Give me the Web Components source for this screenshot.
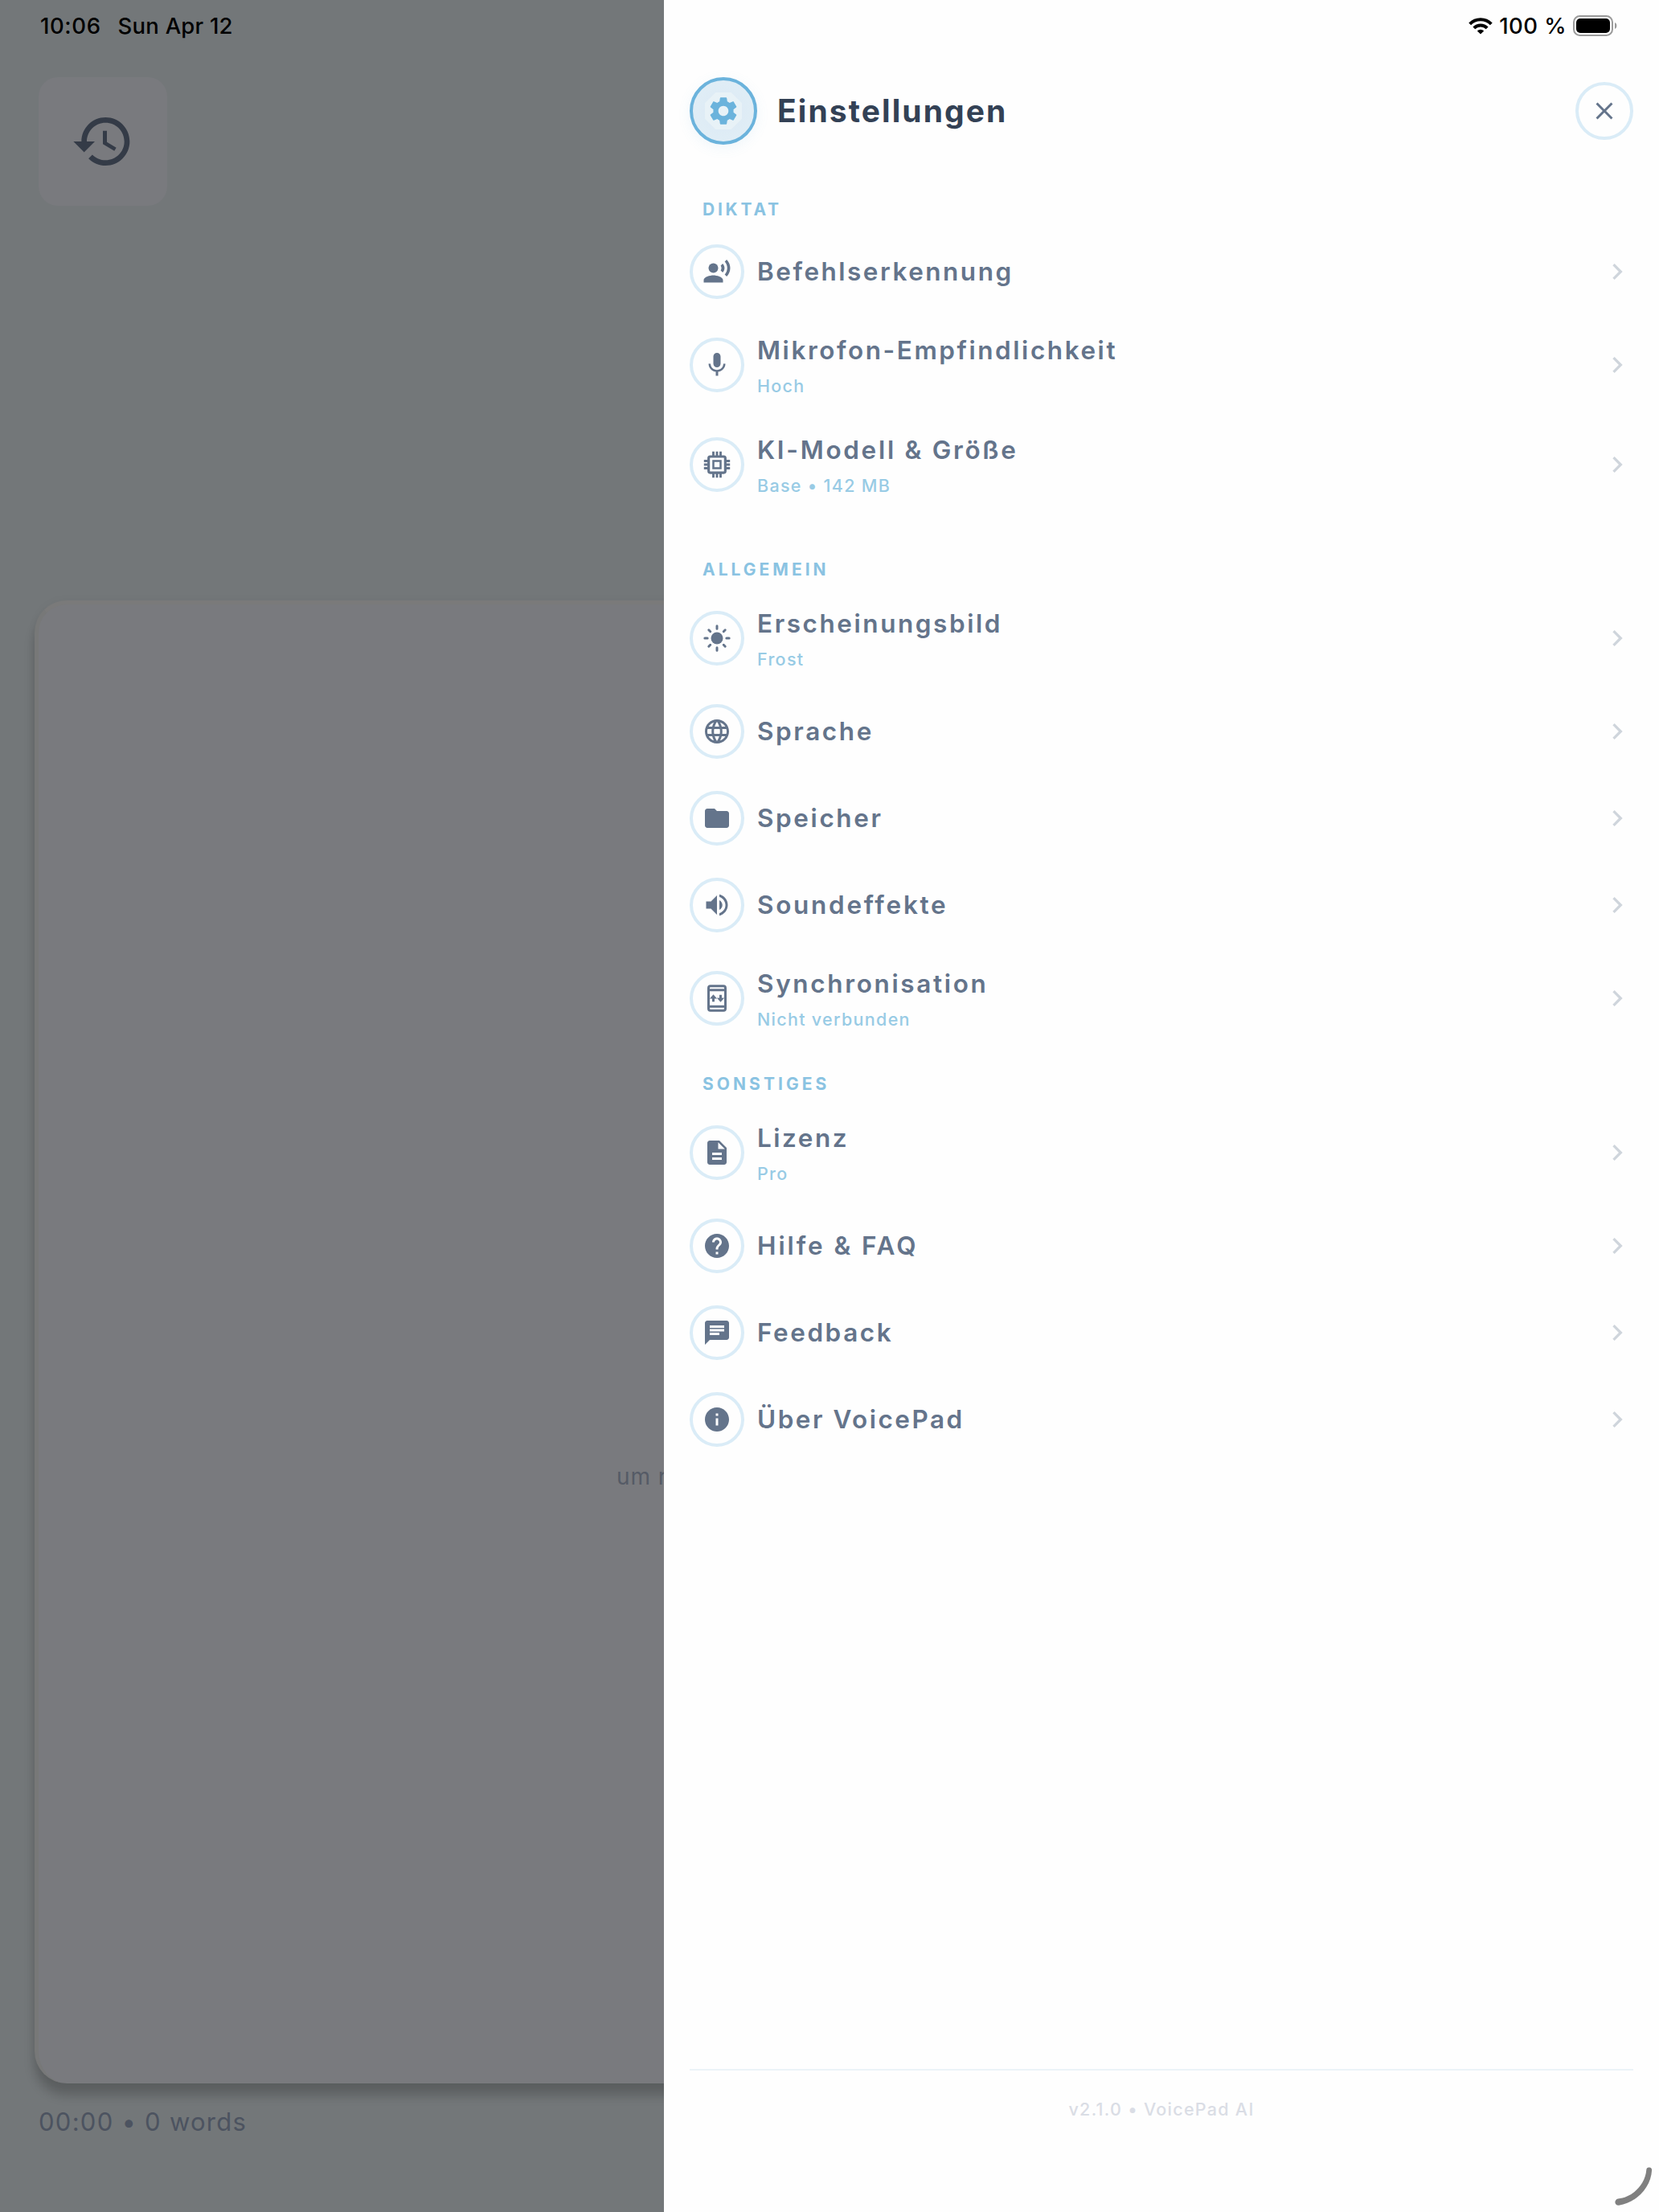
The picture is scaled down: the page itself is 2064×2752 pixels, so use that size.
<!DOCTYPE html>
<html lang="de">
<head>
<meta charset="utf-8">
<title>VoicePad – Einstellungen</title>
<style>
html,body{margin:0;height:100%;background:#737779}
body{font-family:Inter,"Liberation Sans",sans-serif;overflow:hidden}
</style>
</head>
<body>
<voicepad-screen>
  <dictation-view slot="main" time="10:06" date="Sun Apr 12" status="00:00 • 0 words">um r</dictation-view>
  <settings-panel slot="panel" heading="Einstellungen" version="v2.1.0 • VoicePad AI">
    <settings-section label="DIKTAT" tracking="3.77">
      <settings-row icon="voice" label="Befehlserkennung" tracking="2.5"></settings-row>
      <settings-row icon="mic" label="Mikrofon-Empfindlichkeit" tracking="2.55">Hoch</settings-row>
      <settings-row icon="chip" label="KI-Modell &amp; Größe" tracking="2.7">Base • 142 MB</settings-row>
    </settings-section>
    <settings-section class="spaced" label="ALLGEMEIN" tracking="4">
      <settings-row icon="sun" label="Erscheinungsbild" tracking="2.56">Frost</settings-row>
      <settings-row icon="globe" label="Sprache" tracking="2.6"></settings-row>
      <settings-row icon="folder" label="Speicher" tracking="2.6"></settings-row>
      <settings-row icon="volume" label="Soundeffekte" tracking="2.7"></settings-row>
      <settings-row icon="sync" label="Synchronisation" tracking="2.65">Nicht verbunden</settings-row>
    </settings-section>
    <settings-section label="SONSTIGES" tracking="4.05">
      <settings-row icon="doc" label="Lizenz" tracking="2.5">Pro</settings-row>
      <settings-row icon="help" label="Hilfe &amp; FAQ" tracking="2.9"></settings-row>
      <settings-row icon="chat" label="Feedback" tracking="2.55"></settings-row>
      <settings-row icon="info" label="Über VoicePad" tracking="2.5"></settings-row>
    </settings-section>
  </settings-panel>
</voicepad-screen>

<script>
const ICONS = {
  voice: '<circle cx="9" cy="9" r="4"/><path d="M9 15c-2.67 0-8 1.34-8 4v2h16v-2c0-2.66-5.33-4-8-4zM16.76 5.36l-1.68 1.69c.84 1.18.84 2.71 0 3.89l1.68 1.69c2.02-2.02 2.02-5.07 0-7.27zM20.07 2l-1.63 1.63c2.77 3.02 2.77 7.56 0 10.74L20.07 16c3.9-3.89 3.91-9.95 0-14z"/>',
  mic: '<path d="M12 14c1.66 0 2.99-1.34 2.99-3L15 5c0-1.66-1.34-3-3-3S9 3.34 9 5v6c0 1.66 1.34 3 3 3zm5.3-3c0 3-2.54 5.1-5.3 5.1S6.7 14 6.7 11H5c0 3.41 2.72 6.23 6 6.72V21h2v-3.28c3.28-.48 6-3.3 6-6.72h-1.7z"/>',
  chip: '<g fill="none" stroke="currentColor"><rect x="5.1" y="5.3" width="13.8" height="13.4" rx="1.3" stroke-width="2.1"/><rect x="9" y="9" width="6" height="6" stroke-width="1.7"/><path d="M9 5V1.2M12 5V1.2M15 5V1.2M9 19v3.8M12 19v3.8M15 19v3.8M5 9H1.2M5 12H1.2M5 15H1.2M19 9h3.8M19 12h3.8M19 15h3.8" stroke-width="1.9"/></g>',
  sun: '<circle cx="12" cy="12" r="5"/><path d="M1.9 12h2.2M19.9 12h2.2M12 1.9v2.2M12 19.9v2.2M5.2 5.2l1.3 1.3M17.5 17.5l1.3 1.3M5.2 18.8l1.3-1.3M17.5 6.5l1.3-1.3" stroke="currentColor" stroke-width="2" stroke-linecap="round"/>',
  globe: '<path d="M11.99 2C6.47 2 2 6.48 2 12s4.47 10 9.99 10C17.52 22 22 17.52 22 12S17.52 2 11.99 2zm6.93 6h-2.95c-.32-1.25-.78-2.45-1.38-3.56 1.84.63 3.37 1.91 4.33 3.56zM12 4.04c.83 1.2 1.48 2.53 1.91 3.96h-3.82c.43-1.43 1.08-2.76 1.91-3.96zM4.26 14C4.1 13.36 4 12.69 4 12s.1-1.36.26-2h3.38c-.08.66-.14 1.32-.14 2 0 .68.06 1.34.14 2H4.26zm.82 2h2.95c.32 1.25.78 2.45 1.38 3.56-1.84-.63-3.37-1.9-4.33-3.56zm2.95-8H5.08c.96-1.66 2.49-2.93 4.33-3.56C8.81 5.55 8.35 6.75 8.03 8zM12 19.96c-.83-1.2-1.48-2.53-1.91-3.96h3.82c-.43 1.43-1.08 2.76-1.91 3.96zM14.34 14H9.66c-.09-.66-.16-1.32-.16-2 0-.68.07-1.35.16-2h4.68c.09.65.16 1.32.16 2 0 .68-.07 1.34-.16 2zm.25 5.56c.6-1.11 1.06-2.31 1.38-3.56h2.95c-.96 1.65-2.49 2.93-4.33 3.56zM16.36 14c.08-.66.14-1.32.14-2 0-.68-.06-1.34-.14-2h3.38c.16.64.26 1.31.26 2s-.1 1.36-.26 2h-3.38z"/>',
  folder: '<path d="M10 4H4c-1.1 0-1.99.9-1.99 2L2 18c0 1.1.9 2 2 2h16c1.1 0 2-.9 2-2V8c0-1.1-.9-2-2-2h-8l-2-2z"/>',
  volume: '<path d="M3 9v6h4l5 5V4L7 9H3zm13.5 3c0-1.77-1.02-3.29-2.5-4.03v8.05c1.48-.73 2.5-2.25 2.5-4.02zM14 3.23v2.06c2.89.86 5 3.54 5 6.71s-2.11 5.85-5 6.71v2.06c4.01-.91 7-4.49 7-8.77s-2.99-7.86-7-8.77z"/>',
  sync: '<rect x="5" y="1.9" width="14" height="20.2" rx="1.6" fill="none" stroke="currentColor" stroke-width="2"/><path d="M4.5 4.2h15v2h-15zM4.5 17.8h15v2h-15z"/><path d="M9 8.9l3.1 3.5H10v2.400H8v-2.400H5.900zM15 15.1l-3.1-3.500H14V9.200h2v2.400h2.100z"/>',
  doc: '<path d="M14 2H6c-1.1 0-1.99.9-1.99 2L4 20c0 1.1.89 2 1.99 2H18c1.1 0 2-.9 2-2V8l-6-6zm2 16H8v-2h8v2zm0-4H8v-2h8v2zm-3-5V3.5L18.5 9H13z"/>',
  help: '<path d="M12 2C6.48 2 2 6.48 2 12s4.48 10 10 10 10-4.48 10-10S17.52 2 12 2zm1 17h-2v-2h2v2zm2.07-7.75l-.9.92C13.45 12.9 13 13.5 13 15h-2v-.5c0-1.1.45-2.1 1.17-2.83l1.24-1.26c.37-.36.59-.86.59-1.41 0-1.1-.9-2-2-2s-2 .9-2 2H8c0-2.21 1.79-4 4-4s4 1.79 4 4c0 .88-.36 1.68-.93 2.25z"/>',
  chat: '<path d="M20 2H4c-1.1 0-1.99.9-1.99 2L2 22l4-4h14c1.1 0 2-.9 2-2V4c0-1.1-.9-2-2-2zM6 9h12v2H6V9zm8 5H6v-2h8v2zm4-6H6V6h12v2z"/>',
  info: '<path d="M12 2C6.48 2 2 6.48 2 12s4.48 10 10 10 10-4.48 10-10S17.52 2 12 2zm1 15h-2v-6h2v6zm0-8h-2V7h2v2z"/>',
  gear: '<path d="M19.14 12.94c.04-.3.06-.61.06-.94 0-.32-.02-.64-.07-.94l2.03-1.58c.18-.14.23-.41.12-.61l-1.92-3.32c-.12-.22-.37-.29-.59-.22l-2.39.96c-.5-.38-1.03-.7-1.62-.94l-.36-2.54c-.04-.24-.24-.41-.48-.41h-3.84c-.24 0-.43.17-.47.41l-.36 2.54c-.59.24-1.13.57-1.62.94l-2.39-.96c-.22-.08-.47 0-.59.22L2.74 8.87c-.12.21-.08.47.12.61l2.03 1.58c-.05.3-.09.63-.09.94s.02.64.07.94l-2.03 1.58c-.18.14-.23.41-.12.61l1.92 3.32c.12.22.37.29.59.22l2.39-.96c.5.38 1.03.7 1.62.94l.36 2.54c.05.24.24.41.48.41h3.84c.24 0 .44-.17.47-.41l.36-2.54c.59-.24 1.13-.56 1.62-.94l2.39.96c.22.08.47 0 .59-.22l1.92-3.32c.12-.22.07-.47-.12-.61l-2.01-1.58zM12 15.6c-1.98 0-3.6-1.62-3.6-3.6s1.62-3.6 3.6-3.6 3.6 1.62 3.6 3.6-1.62 3.6-3.6 3.6z"/>',
  close: '<path d="M19 6.41L17.59 5 12 10.59 6.41 5 5 6.41 10.59 12 5 17.59 6.41 19 12 13.41 17.59 19 19 17.59 13.41 12z"/>',
  chevron: '<path d="M10 6L8.59 7.41 13.17 12l-4.58 4.59L10 18l6-6z"/>',
  history: '<path d="M13 3c-4.97 0-9 4.03-9 9H1l3.89 3.89.07.14L9 12H6c0-3.87 3.13-7 7-7s7 3.13 7 7-3.13 7-7 7c-1.93 0-3.68-.79-4.94-2.06l-1.42 1.42C8.27 19.99 10.51 21 13 21c4.97 0 9-4.03 9-9s-4.03-9-9-9zm-1 5v5l4.28 2.54.72-1.21-3.5-2.08V8H12z"/>'
};

class Base extends HTMLElement {
  connectedCallback() {
    if (!this.shadowRoot) this.attachShadow({mode: 'open'}).innerHTML = this.view();
  }
  attr(n) { return (this.getAttribute(n) || '').replace(/&/g, '&amp;'); }
}

customElements.define('vp-icon', class extends Base {
  view() {
    return `<style>:host{display:block;flex:none;width:var(--size,36px);height:var(--size,36px)}svg{display:block;width:100%;height:100%;fill:currentColor}</style>
    <svg viewBox="0 0 24 24">${ICONS[this.getAttribute('name')]}</svg>`;
  }
});

customElements.define('voicepad-screen', class extends Base {
  view() {
    return `<style>
      :host{display:flex;width:2064px;height:2752px;background:#fefefe;position:relative;overflow:hidden}
      slot[name=main]::slotted(*){flex:none;width:826px}
      slot[name=panel]::slotted(*){flex:1}
      .corner{position:absolute;right:0;bottom:0;width:64px;height:64px}
    </style>
    <slot name="main"></slot><slot name="panel"></slot>
    <svg class="corner" viewBox="0 0 64 64"><path d="M48.3 11.6a3.4 3.4 0 0 1 6.8.5C54 33 37 52 14 55.8 8 56 8 48.5 13 47.5 31 46 47 30 48.3 11.6z" fill="#808080"/></svg>`;
  }
});

customElements.define('dictation-view', class extends Base {
  view() {
    return `<style>
      :host{display:flex;flex-direction:column;height:100%;box-sizing:border-box;background:#737779;overflow:hidden}
      .status{display:flex;height:64px;padding-left:50px;align-items:center;font-size:27.5px;font-weight:500;color:#000;gap:21px}
      .time{letter-spacing:.6px}.date{letter-spacing:.22px}
      .history{display:flex;align-items:center;justify-content:center;width:160px;height:160px;margin:32px 0 0 48px;border-radius:24px;background:#797a7e;color:#343b47;--size:80px}
      .card{flex:none;display:flex;box-sizing:border-box;width:1978px;height:1845px;margin:491px 0 0 43px;padding:1065px 0 0 719px;border:5px solid #7a7a7a;border-left-color:#777878;border-bottom:0;border-radius:40px;background:#797a7e;box-shadow:0 15px 14px rgba(0,0,0,.2),0 0 12px rgba(0,0,0,.04);font-size:28px;line-height:40px;letter-spacing:.94px;color:#555b66}
      .words{margin:28px 0 0 48px;font-size:31px;line-height:40px;letter-spacing:1.26px;color:#4c5360}
    </style>
    <div class="status"><span class="time">${this.attr('time')}</span><span class="date">${this.attr('date')}</span></div>
    <div class="history"><vp-icon name="history"></vp-icon></div>
    <div class="card"><div><slot></slot></div></div>
    <div class="words">${this.attr('status')}</div>`;
  }
});

customElements.define('settings-panel', class extends Base {
  view() {
    return `<style>
      :host{display:flex;flex-direction:column;height:100%;box-sizing:border-box;padding:0 32px;background:#fefefe}
      .status{display:flex;align-items:center;justify-content:flex-end;height:64px;padding-right:20px;font-size:27.5px;font-weight:500;letter-spacing:.44px;color:#000}
      .wifi{width:30px;height:22px;margin-right:8px}
      .battery{width:56px;height:28px;margin-left:7px}
      header{display:flex;align-items:center;height:84px;margin-top:32px}
      .badge{flex:none;display:flex;align-items:center;justify-content:center;box-sizing:border-box;width:84px;height:84px;border:4px solid #6bb3dc;border-radius:50%;background:radial-gradient(#dbe9f5,#e2eff6);box-shadow:0 4px 16px rgba(107,179,220,.1);color:#6bb3dc}
      .facet{display:flex;align-items:center;justify-content:center;width:46px;height:46px;background:#e8f2f7;clip-path:polygon(29% 0,71% 0,100% 29%,100% 71%,71% 100%,29% 100%,0 71%,0 29%);--size:42px}
      h1{flex:1;margin:0 0 0 25px;font-size:39px;line-height:48px;font-weight:650;letter-spacing:2.08px;color:#334155}
      .close{display:flex;align-items:center;justify-content:center;box-sizing:border-box;width:72px;height:72px;border:4px solid #daecf7;border-radius:50%;color:#64748b}
      main{flex:1;padding-top:36px}
      footer{height:176px;border-top:2px solid #ebf3f8;text-align:center;font-size:21.5px;line-height:28px;font-weight:450;letter-spacing:1.28px;color:#dadde5;box-sizing:content-box}
      footer div{padding-top:34px}
    </style>
    <div class="status">
      <svg class="wifi" viewBox="0 0 30 22"><g fill="none" stroke="#000" stroke-width="4"><path d="M1.7 8.8a18.7 18.7 0 0 1 26.6 0"/><path d="M6.8 13.9a11.6 11.6 0 0 1 16.4 0"/></g><path d="M10.8 17.5a6 6 0 0 1 8.4 0L15 21.5z"/></svg>
      <span>100 %</span>
      <svg class="battery" viewBox="0 0 56 28"><rect x="2" y="2" width="48" height="24" rx="7.5" fill="none" stroke="#9b9b9b" stroke-width="2"/><rect x="5" y="5" width="42" height="18" rx="5"/><path d="M53 10c3.2 1.2 3.2 6.8 0 8z" fill="#9b9b9b"/></svg>
    </div>
    <header>
      <div class="badge"><div class="facet"><vp-icon name="gear"></vp-icon></div></div>
      <h1>${this.attr('heading')}</h1>
      <div class="close"><vp-icon name="close"></vp-icon></div>
    </header>
    <main><slot></slot></main>
    <footer><div>${this.attr('version')}</div></footer>`;
  }
});

customElements.define('settings-section', class extends Base {
  view() {
    return `<style>
      :host{display:block}
      :host(.spaced){padding-top:24px}
      h2{display:flex;align-items:flex-end;box-sizing:border-box;height:68px;margin:0;padding:0 0 9px 16px;font-size:21px;line-height:28px;font-weight:700;color:#8ac3e2}
    </style>
    <h2 style="letter-spacing:${this.attr('tracking')}px">${this.attr('label')}</h2><slot></slot>`;
  }
});

customElements.define('settings-row', class extends Base {
  view() {
    const sub = this.textContent.trim();
    return `<style>
      :host{display:flex;align-items:center;height:${sub ? 124 : 108}px}
      .ring{flex:none;display:flex;align-items:center;justify-content:center;box-sizing:border-box;width:68px;height:68px;border:4px solid #daecf7;border-radius:50%;color:#64748b}
      .text{flex:1;display:flex;flex-direction:column;gap:13px;margin-left:16px;padding-top:${sub ? 1 : 0}px}
      .label{font-size:31.5px;line-height:38px;font-weight:560;color:#64748b;letter-spacing:${this.attr('tracking')}px}
      .sub{font-size:21.5px;line-height:24px;font-weight:500;letter-spacing:1.3px;color:#98cbe5}
      .go{--size:40px;color:#cfd5dc}
    </style>
    <div class="ring"><vp-icon name="${this.attr('icon')}"></vp-icon></div>
    <div class="text"><div class="label">${this.attr('label')}</div>${sub ? '<div class="sub"><slot></slot></div>' : ''}</div>
    <vp-icon class="go" name="chevron"></vp-icon>`;
  }
});
</script>
</body>
</html>
